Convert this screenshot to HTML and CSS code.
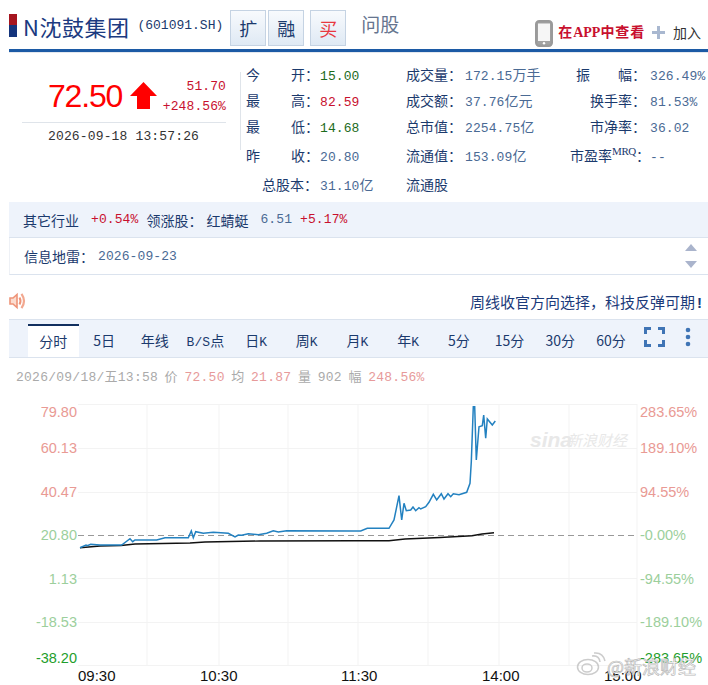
FILE: index.html
```html
<!DOCTYPE html>
<html lang="zh">
<head>
<meta charset="utf-8">
<title>N沈鼓集团</title>
<link rel="stylesheet" href="styles.css">
</head>
<body>
<header class="head">
  <i class="flag"></i>
  <h1 class="name">N沈鼓集团</h1>
  <span class="code mono">(601091.SH)</span>
  <div class="badges">
    <span class="badge">扩</span>
    <span class="badge">融</span>
    <span class="badge badge-buy">买</span>
  </div>
  <span class="ask">问股</span>
  <svg class="phone" width="18" height="27" viewBox="0 0 18 27"><rect x="1.200" y="1.200" width="15.600" height="24.600" rx="3" fill="#a3a3a3" stroke="#9a9a9a" stroke-width="2.400"/><rect x="3" y="3.500" width="12" height="17.500" fill="#f6f6f6"/><circle cx="9" cy="23.300" r="1.200" fill="#fff"/></svg>
  <span class="app">在<span class="app-en">APP</span>中查看</span>
  <svg class="plus" width="13" height="13" viewBox="0 0 13 13"><path d="M0 6.500h13M6.500 0v13" stroke="#a9b8d0" stroke-width="3"/></svg>
  <span class="add">加入</span>
</header>

<section class="quote">
  <div class="price-box">
    <div class="price-row">
      <span class="price">72.50</span>
      <svg class="arrow" width="27" height="27" viewBox="0 0 27 27"><path d="M13.500 0L27 14H20V27H7V14H0Z" fill="#f00"/></svg>
      <div class="change mono"><div>51.70</div><div>+248.56%</div></div>
    </div>
    <div class="time mono">2026-09-18 13:57:26</div>
  </div>
  <div class="stats">
    <div class="lbl split"><span>今</span><span>开：</span></div><div class="val mono green">15.00</div>
    <div class="lbl">成交量：</div><div class="val mono">172.15<span class="cjk">万手</span></div>
    <div class="lbl right"><span class="wide"><span>振</span><span>幅：</span></span></div><div class="val mono">326.49%</div>

    <div class="lbl split"><span>最</span><span>高：</span></div><div class="val mono red">82.59</div>
    <div class="lbl">成交额：</div><div class="val mono">37.76<span class="cjk">亿元</span></div>
    <div class="lbl right">换手率：</div><div class="val mono">81.53%</div>

    <div class="lbl split"><span>最</span><span>低：</span></div><div class="val mono green">14.68</div>
    <div class="lbl">总市值：</div><div class="val mono">2254.75<span class="cjk">亿</span></div>
    <div class="lbl right">市净率：</div><div class="val mono">36.02</div>

    <div class="lbl split"><span>昨</span><span>收：</span></div><div class="val mono">20.80</div>
    <div class="lbl">流通值：</div><div class="val mono">153.09<span class="cjk">亿</span></div>
    <div class="lbl right">市盈率<sup class="mrq">MRQ</sup>：</div><div class="val mono">--</div>

    <div class="lbl right r1">总股本：</div><div class="val mono">31.10<span class="cjk">亿</span></div>
    <div class="lbl">流通股</div><div class="val"></div>
    <div class="lbl"></div><div class="val"></div>
  </div>
</section>

<section class="sector">
  <span>其它行业</span><span class="mono red s1">+0.54%</span>
  <span class="s2">领涨股：</span><span class="s5">红蜻蜓</span>
  <span class="mono s3">6.51</span><span class="mono red s4">+5.17%</span>
</section>
<section class="info">
  <span>信息地雷：</span><span class="mono val">2026-09-23</span>
  <div class="updown"><i class="up"></i><i class="down"></i></div>
</section>

<section class="news">
  <svg width="18" height="18" viewBox="0 0 18 18"><path d="M1 6h3l4-3.500v13L4 12H1z" fill="#fbdccf" stroke="#ee9478" stroke-width="1.600"/><path d="M10.500 5.500q2 3.500 0 7" fill="none" stroke="#ee9478" stroke-width="2"/><path d="M12.500 1.800q5 7.200 0 14.400" fill="none" stroke="#f2a890" stroke-width="2.200"/></svg>
  <span class="news-text">周线收官方向选择，科技反弹可期<span class="bang">!</span></span>
</section>

<nav class="tabs">
  <span class="tab active">分时</span>
  <span class="tab">5日</span>
  <span class="tab">年线</span>
  <span class="tab"><span class="mono">B/S</span>点</span>
  <span class="tab">日<span class="mono">K</span></span>
  <span class="tab">周<span class="mono">K</span></span>
  <span class="tab">月<span class="mono">K</span></span>
  <span class="tab">年<span class="mono">K</span></span>
  <span class="tab">5分</span>
  <span class="tab">15分</span>
  <span class="tab">30分</span>
  <span class="tab">60分</span>
  <svg class="full" width="21" height="20" viewBox="0 0 21 20"><path d="M1.500 7V1.500H7M14 1.500h5.500V7M1.500 13v5.500H7M14 18.500h5.500V13" fill="none" stroke="#3f74b5" stroke-width="3"/></svg>
  <svg class="more" width="6" height="20" viewBox="0 0 6 20"><circle cx="3" cy="3" r="2.300" fill="#3f74b5"/><circle cx="3" cy="10" r="2.300" fill="#3f74b5"/><circle cx="3" cy="17" r="2.300" fill="#3f74b5"/></svg>
</nav>

<div class="status mono">2026/09/18/五13:58 价 <span class="pink">72.50</span> 均 <span class="pink">21.87</span> 量 902 幅 <span class="pink">248.56%</span></div>

<svg class="chart" width="708" height="290" viewBox="0 395 708 290">
  <g class="grid">
    <path d="M78 404.500H637M78 448.500H637M78 492.500H637M78 578.500H637M78 622.500H637M78 665.500H637"/>
    <path d="M147 404V666M219 404V666M288 404V666M358 404V666M428 404V666M499 404V666M569 404V666M637 404V666"/>
  </g>
  <path class="base" d="M78 535.500H637"/>
  <g class="wm">
    <text x="530" y="447" class="wm-sina">sina</text>
    <text x="567" y="446" class="wm-cn">新浪财经</text>
  </g>
  <g class="yl">
    <text x="77" y="417" class="p">79.80</text>
    <text x="77" y="453" class="p">60.13</text>
    <text x="77" y="497" class="p">40.47</text>
    <text x="77" y="540" class="g">20.80</text>
    <text x="77" y="584" class="g">1.13</text>
    <text x="77" y="627" class="g">-18.53</text>
    <text x="77" y="663" class="dg">-38.20</text>
  </g>
  <g class="yr">
    <text x="640" y="417" class="p">283.65%</text>
    <text x="640" y="453" class="p">189.10%</text>
    <text x="640" y="497" class="p">94.55%</text>
    <text x="640" y="540" class="g">-0.00%</text>
    <text x="640" y="584" class="g">-94.55%</text>
    <text x="640" y="627" class="g">-189.10%</text>
    <text x="640" y="663" class="dg">-283.65%</text>
  </g>
  <g class="xl">
    <text x="78" y="681">09:30</text>
    <text x="200" y="681">10:30</text>
    <text x="341" y="681">11:30</text>
    <text x="482" y="681">14:00</text>
    <text x="604" y="681">15:00</text>
  </g>
  <polyline class="avg" points="80,547.700 100,546 121,545.500 135,544 190,543 205,542 260,541 354,540.700 389,540.700 405,539 440,537.500 472,535.700 482,534 494,532.700"/>
  <polyline class="line" points="80,547.700 86,545 87.300,545.700 90.700,544.300 100,545 121.700,545 130,538.700 132.700,541.700 135,540 156.700,540 165,537.700 188.300,537.700 191.300,531 193.300,537.700 195.700,531.700 203.300,533.300 213.300,532.300 228.300,533.300 235,537 238.300,535 241.700,535.300 248.300,533.700 258.300,534.700 266.700,533.300 273.300,530.700 278.300,532 286.700,530.700 354,531 360.700,531 367.300,528.300 389,528.300 394,520 399,495.700 401.700,520 404,503.300 406.300,510.700 410.700,510 413,507 415.700,510.700 419,507.700 420.700,509 425.700,506.700 429,502.300 433.300,494.300 436.700,500 441.300,493.700 444,499 448,493.700 450.700,496.700 453.300,493.700 459,494.700 466.700,492.300 470,483.300 471.300,461.700 473.300,406.700 474.700,406.700 476.300,460 479,426.700 482.300,425.700 483.700,415 485.700,438.300 487.300,419 492.300,425 495.300,421"/>
  <g class="weibo">
    <ellipse cx="588" cy="667" rx="10.500" ry="7.500"/>
    <ellipse cx="587" cy="668" rx="5" ry="4"/>
    <path d="M592 656q7-1 8 6M594 653q9-1 11 8"/>
    <text x="607" y="674">@新浪财经</text>
  </g>
</svg>
</body>
</html>
```
FILE: styles.css
```css
* { box-sizing: border-box; }
html, body { margin: 0; padding: 0; }
body {
  width: 708px;
  height: 685px;
  overflow: hidden;
  background: #fff;
  color: #1b3a6d;
  font-family: "Noto Sans CJK SC", "Liberation Sans", sans-serif;
  font-size: 14px;
}
.mono { font-family: "Liberation Mono", "Noto Sans CJK SC", monospace; font-size: 13px; letter-spacing: .1px; }
.cjk { font-family: "Noto Sans CJK SC", sans-serif; font-size: 14px; }
.red { color: #c8102e; }
.green { color: #1c6b1c; }

.head {
  margin-left: 9px;
  height: 52px;
  border-bottom: 3px solid #1c5aa5;
  box-shadow: 0 1px 0 #e4e8ef;
  display: flex;
  align-items: flex-start;
}
.flag {
  width: 8px; height: 23px; margin-top: 14px;
  background: linear-gradient(#a5151f 50%, #14347c 50%);
}
.name {
  margin: 12px 0 0 6px;
  font-size: 22px; line-height: 28px; font-weight: 400;
  color: #1b3a80; white-space: nowrap; letter-spacing: .5px;
}
.code { margin: 17px 0 0 8px; color: #1b3a6d; line-height: 18px; letter-spacing: 0; }
.badges { display: flex; margin: 10px 0 0 7px; gap: 2px; }
.badge {
  width: 36px; height: 36px; line-height: 34px; text-align: center;
  font-size: 18px;
  background: linear-gradient(#f8fafd, #dfe9f4);
  border: 1px solid #c5d3e3;
  color: #1b3a6d;
}
.badge-buy { color: #e8383f; margin-left: 4px; }
.ask { margin: 10px 0 0 15px; font-size: 19px; line-height: 28px; color: #66758f; }
.phone { margin: 20px 0 0 136px; }
.app { margin: 20px 0 0 5px; font-size: 14px; line-height: 22px; font-weight: 700; color: #c8102e; white-space: nowrap; letter-spacing: .9px; }
.app-en { font-family: "Liberation Serif", serif; letter-spacing: 0; }
.plus { margin: 26px 0 0 7px; }
.add { margin: 21px 0 0 8px; color: #333; line-height: 22px; }

.quote { display: flex; height: 142px; margin-left: 9px; }
.price-box { width: 222px; padding-top: 22px; margin-left: 13px; display: flex; flex-direction: column; }
.price-row {
  display: flex; align-items: flex-start; height: 49px;
  border-bottom: 1px solid #dfe4ea; width: 204px;
  padding-left: 26px;
}
.price { font-family: "Liberation Sans", sans-serif; font-size: 32px; line-height: 44px; color: #f00; letter-spacing: -1.200px; }
.arrow { margin: 8px 0 0 8px; }
.change { margin-left: auto; text-align: right; color: #c8102e; line-height: 20px; padding-top: 3px; }
.time { margin: 5px 0 0 26px; color: #333; line-height: 18px; letter-spacing: .15px; }

.stats {
  margin: 9px 0 0 15px;
  display: grid;
  grid-template-columns: 74px 86px 59px 105px 80px 58px;
  grid-template-rows: 26px 26px 29px 29px 26px;
  align-items: baseline;
  position: relative;
  line-height: 26px;
  white-space: nowrap;
}
.stats::before {
  content: ""; position: absolute; left: -6px; top: 11px; width: 1px; height: 78px; background: #dfe4ea;
}
.lbl { color: #1b3a6d; }
.val { color: #4a6a94; }
.val.green { color: #1c6b1c; }
.val.red { color: #c8102e; }
.split { display: flex; justify-content: space-between; padding-right: 1px; }
.right { text-align: right; padding-right: 6px; margin-right: -2px; }
.r1 { padding-right: 4px; }
.wide { display: inline-flex; justify-content: space-between; width: 70px; }
.mrq { font-family: "Liberation Serif", serif; font-size: 11px; line-height: 0; letter-spacing: -.4px; }

.sector {
  margin: 8px 0 0 9px; height: 36px; padding: 0 0 0 14px;
  background: #eef3fb; border-bottom: 1px solid #dbe3ee;
  display: flex; align-items: center; color: #1b3a6d;
}
.s1 { margin-left: 12px; } .s2 { margin-left: 8px; } .s5 { margin-left: 4px; } .s3 { margin-left: 12px; color: #4a6a94; } .s4 { margin-left: 8px; }
.info {
  margin-left: 9px; height: 37px; padding: 0 11px 0 14px;
  border-bottom: 1px solid #dbe3ee; border-left: 1px solid #eef1f6;
  display: flex; align-items: center; color: #1b3a6d;
}
.info .val { margin-left: 4px; }
.updown { margin-left: auto; display: flex; flex-direction: column; gap: 10px; }
.up, .down { width: 0; height: 0; border-left: 6.500px solid transparent; border-right: 6.500px solid transparent; }
.up { border-bottom: 7px solid #aab4cc; }
.down { border-top: 7px solid #aab4cc; }

.news {
  margin: 17px 6px 0 9px; height: 18px; display: flex; align-items: center; justify-content: space-between;
}
.news-text { font-size: 15px; color: #1b3a7a; white-space: nowrap; }
.bang { font-family: "Liberation Sans", sans-serif; font-weight: 700; margin-left: 2px; }

.tabs {
  margin: 9px 0 0 9px; height: 39px; padding: 4px 0 0 19px;
  background: #eef3fb; border-top: 1px solid #dbe3ee; border-bottom: 1px solid #dbe3ee;
  display: flex; align-items: stretch; color: #1b3a6d;
}
.tab { width: 50.700px; text-align: center; line-height: 33px; white-space: nowrap; }
.active { background: #fff; border-top: 2px solid #12305f; line-height: 30px; }
.full { margin: 3px 0 0 8px; }
.more { margin: 3px 0 0 20px; }

.status { margin: 10px 0 0 16px; height: 20px; line-height: 20px; color: #aaa; white-space: nowrap; letter-spacing: .25px; word-spacing: -1.500px; }
.pink { color: #e79a9a; }

.chart { display: block; margin-top: 7px; }
.grid path { stroke: #f3f3f3; stroke-width: 1; fill: none; }
.base { stroke: #999; stroke-dasharray: 6 4; fill: none; }
.yl text, .yr text, .xl text { font-family: "Liberation Sans", sans-serif; font-size: 14.500px; }
.yl text { text-anchor: end; }
.p { fill: #e99a94; }
.g { fill: #9ccf9c; }
.dg { fill: #1f9e2c; }
.xl text { font-size: 15px; fill: #111; }
.line { fill: none; stroke: #2381c0; stroke-width: 1.500; }
.avg { fill: none; stroke: #111; stroke-width: 1.400; }
.wm-sina { font-family: "Liberation Sans", sans-serif; font-size: 21px; font-weight: 700; font-style: italic; fill: #e8e8e8; }
.wm-cn { font-size: 15px; font-style: italic; fill: #e8e8e8; }
.weibo ellipse, .weibo path { fill: none; stroke: #ccc; stroke-width: 1.500; }
.weibo text { font-size: 18px; fill: #fff; stroke: #bbb; stroke-width: .7; }
```
